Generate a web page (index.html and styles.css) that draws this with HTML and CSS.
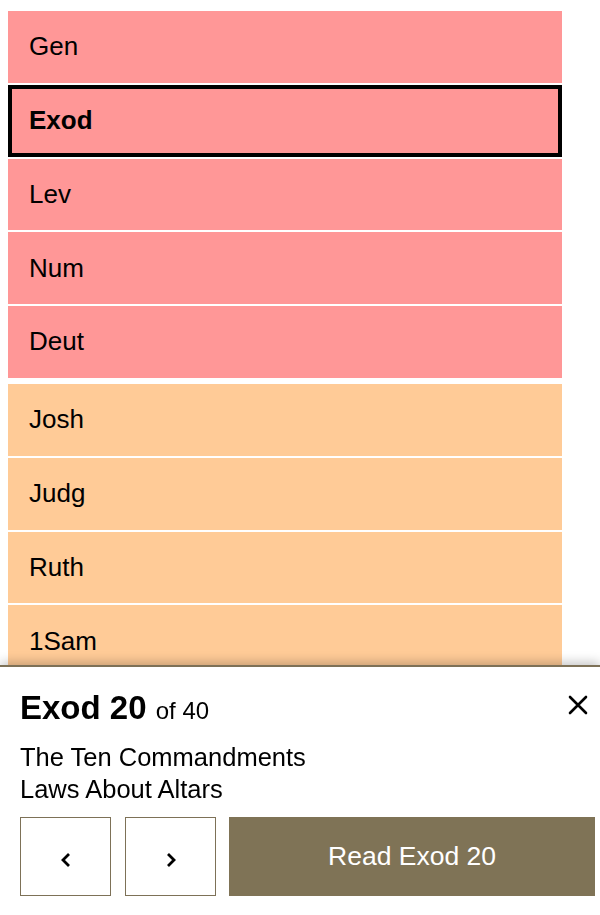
FILE: index.html
```html
<!DOCTYPE html>
<html lang="en">
<head>
  <meta charset="UTF-8">
  <meta name="viewport" content="width=device-width, initial-scale=1.0">
  <title>Books</title>
  <link rel="stylesheet" href="styles.css">
</head>
<body>
  <div class="books">
    <!-- Law -->
    <div class="group law">
      <div class="book">Gen</div>
      <div class="book current">Exod</div>
      <div class="book">Lev</div>
      <div class="book">Num</div>
      <div class="book">Deut</div>
    </div>

    <!-- History -->
    <div class="group history">
      <div class="book">Josh</div>
      <div class="book">Judg</div>
      <div class="book">Ruth</div>
      <div class="book">1Sam</div>
    </div>
  </div>

  <!-- chapter sheet -->
  <div class="sheet">
    <div class="sheet-head">
      <div class="sheet-title"><b>Exod 20</b> <span class="of">of 40</span></div>
      <button class="close" aria-label="Close">
        <svg width="20" height="20" viewBox="0 0 20 20"><path d="M2 2 L18 18 M18 2 L2 18" stroke="#000" stroke-width="2.6" stroke-linecap="round"/></svg>
      </button>
    </div>
    <div class="headings">
      <div class="heading">The Ten Commandments</div>
      <div class="heading">Laws About Altars</div>
    </div>
    <div class="actions">
      <button class="nav">
        <svg width="12" height="16" viewBox="0 0 12 16"><polyline points="9,2 3,8 9,14" fill="none" stroke="#000" stroke-width="2.8"/></svg>
      </button>
      <button class="nav">
        <svg width="12" height="16" viewBox="0 0 12 16"><polyline points="3,2 9,8 3,14" fill="none" stroke="#000" stroke-width="2.8"/></svg>
      </button>
      <button class="read">Read Exod 20</button>
    </div>
  </div>
</body>
</html>
```

FILE: styles.css
```css
body {
  margin: 0;
  padding: 11px 0 0 8px;
  font-family: "Liberation Sans", Arial, sans-serif;
  background-color: #ffffff;
  color: #000;
}

.books {
  width: 554px;
  display: flex;
  flex-direction: column;
  gap: 6.25px; /* space between groups */
}

.group {
  display: flex;
  flex-direction: column;
  gap: 2px;
}

.book {
  height: 71.75px;
  display: flex;
  align-items: center;
  padding-left: 21px;
  font-size: 26px;
}

.law .book {
  background-color: #ff9797;
}

.history .book {
  background-color: #ffcb97;
}

.book.current {
  font-weight: bold;
  box-shadow: inset 0 0 0 4px #000;
}

.sheet {
  position: fixed;
  left: 0;
  right: 0;
  bottom: 0;
  height: 250px;
  box-sizing: border-box;
  background-color: #fff;
  border-top: 2px solid #7d7157;
  box-shadow: 0 -3px 10px rgba(0, 0, 0, 0.22);
  padding: 24px 5px 19px 20px;
}

.sheet-head {
  display: flex;
  align-items: center;
  justify-content: space-between;
  height: 36px;
  padding-right: 7px;
}

.sheet-title {
  font-size: 33px;
  line-height: 36px;
  white-space: nowrap;
}

.sheet-title .of {
  font-size: 24px;
}

.close {
  border: none;
  background: none;
  padding: 0;
  display: flex;
  margin-bottom: 8px;
}

.headings {
  margin-top: 14px;
  font-size: 25.5px;
}

.heading {
  height: 32px;
  line-height: 32px;
}

.actions {
  display: flex;
  margin-top: 12px;
  height: 79px;
}

.nav {
  width: 91px;
  margin-right: 14px;
  border: 1.5px solid #7d7157;
  background-color: #fff;
  display: flex;
  align-items: center;
  justify-content: center;
  padding: 6px 0 0;
}

.read {
  flex: 1;
  margin-left: -1px;
  border: none;
  background-color: #7f7356;
  color: #fff;
  font-family: "Liberation Sans", Arial, sans-serif;
  font-size: 26.5px;
}
```
